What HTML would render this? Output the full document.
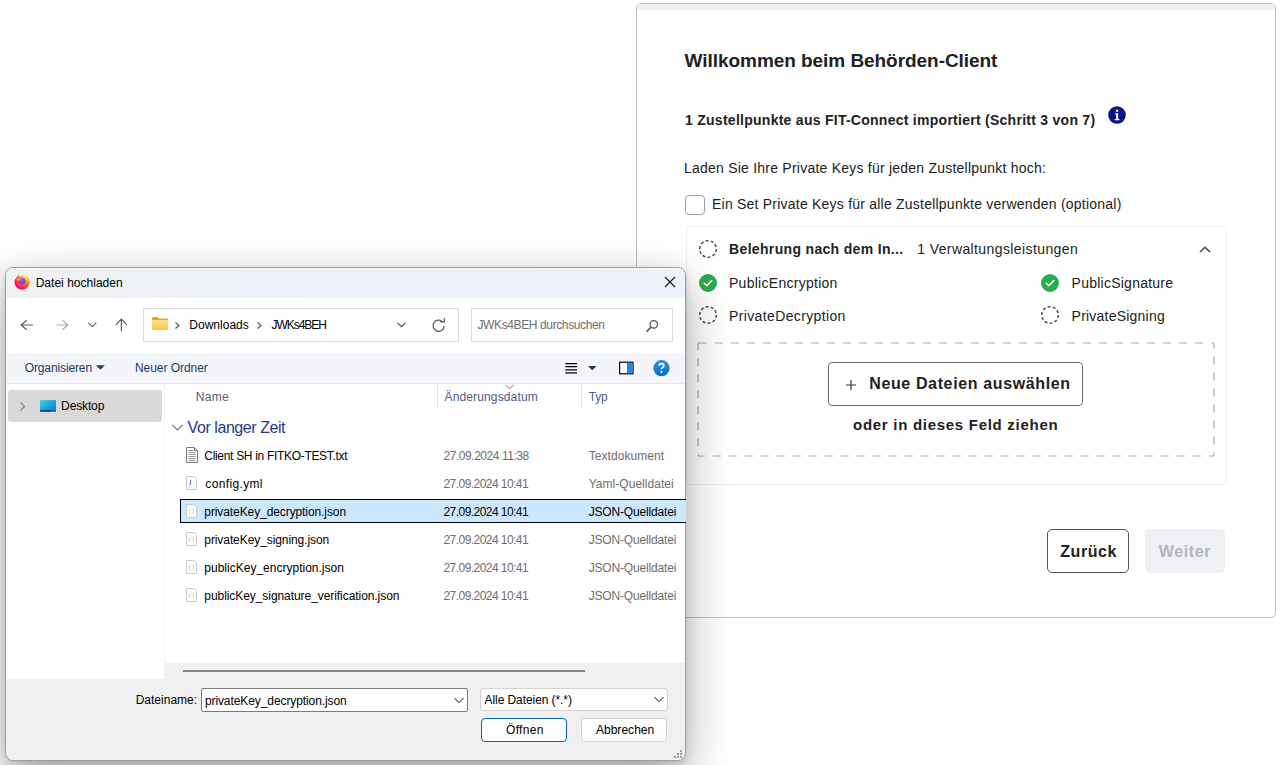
<!DOCTYPE html>
<html><head><meta charset="utf-8">
<style>
*{box-sizing:border-box;margin:0;padding:0}
html,body{width:1281px;height:765px;overflow:hidden;background:#fff;font-family:"Liberation Sans",sans-serif;position:relative}
.a{position:absolute}
.t{position:absolute;white-space:nowrap;line-height:1;font-family:"Liberation Sans",sans-serif}
</style></head><body>
<div class="a" style="left:636px;top:3px;width:640px;height:615px;border:1px solid #bdbec2;border-radius:5px;background:#fff;overflow:hidden">
  <div class="a" style="left:0;top:0;width:100%;height:6px;background:#eef0f3"></div>
</div>
<svg class="a" style="left:1107px;top:105px" width="20" height="20" viewBox="0 0 20 20"><circle cx="10" cy="10" r="8.8" fill="#07138a"/><rect x="9" y="4.6" width="2.2" height="2.2" fill="#fff"/><path d="M8.1 8.3h3.1v5.6h1.3v1.4H7.6v-1.4h1.4V9.6h-0.9z" fill="#fff"/></svg>
<div class="a" style="left:685px;top:195px;width:20px;height:20px;border:1px solid #9c9ea3;border-radius:4px;background:#fff"></div>
<div class="a" style="left:686px;top:226px;width:541px;height:259px;border:1px solid #eceef2;border-radius:4px"></div>
<svg class="a" style="left:698px;top:239px;" width="20" height="20" viewBox="0 0 20 20"><circle cx="10" cy="10" r="8.3" fill="none" stroke="#4a4a4a" stroke-width="1.45" stroke-dasharray="3 2.2"/></svg>
<svg class="a" style="left:698px;top:273px;" width="20" height="20" viewBox="0 0 20 20"><circle cx="10" cy="10" r="9" fill="#2aac4c"/><path d="M6.3 10.3L8.8 12.7L13.7 7.6" fill="none" stroke="#fff" stroke-width="1.6" stroke-linecap="round" stroke-linejoin="round"/></svg>
<svg class="a" style="left:698px;top:305px;" width="20" height="20" viewBox="0 0 20 20"><circle cx="10" cy="10" r="8.3" fill="none" stroke="#4a4a4a" stroke-width="1.45" stroke-dasharray="3 2.2"/></svg>
<svg class="a" style="left:1040px;top:273px;" width="20" height="20" viewBox="0 0 20 20"><circle cx="10" cy="10" r="9" fill="#2aac4c"/><path d="M6.3 10.3L8.8 12.7L13.7 7.6" fill="none" stroke="#fff" stroke-width="1.6" stroke-linecap="round" stroke-linejoin="round"/></svg>
<svg class="a" style="left:1040px;top:305px;" width="20" height="20" viewBox="0 0 20 20"><circle cx="10" cy="10" r="8.3" fill="none" stroke="#4a4a4a" stroke-width="1.45" stroke-dasharray="3 2.2"/></svg>
<svg class="a" style="left:1198px;top:244px" width="14" height="10" viewBox="0 0 14 10"><path d="M2 8L7 3.2L12 8" fill="none" stroke="#444" stroke-width="1.5"/></svg>
<svg class="a" style="left:697px;top:342px" width="518" height="115" viewBox="0 0 518 115"><rect x="1" y="1" width="516" height="113" rx="1" fill="none" stroke="#a9abb0" stroke-width="1.2" stroke-dasharray="8 8"/></svg>
<div class="a" style="left:828px;top:362px;width:255px;height:44px;border:1px solid #6c6c6c;border-radius:4px;background:#fff"></div>
<svg class="a" style="left:845px;top:379px" width="12" height="12" viewBox="0 0 12 12"><path d="M6 1v10M1 6h10" stroke="#333" stroke-width="1.2"/></svg>
<div class="a" style="left:1047px;top:529px;width:82px;height:44px;border:1px solid #555;border-radius:5px;background:#fff"></div>
<div class="a" style="left:1145px;top:529px;width:80px;height:44px;border-radius:5px;background:#eef0f3"></div>

<div class="a" style="left:5px;top:267px;width:681px;height:494px;border:1px solid #9c9c9c;border-radius:8px;background:#f0f0f0;overflow:hidden;box-shadow:0 16px 48px rgba(0,0,0,0.33), 0 4px 8px rgba(0,0,0,0.12)">
  <div class="a" style="left:0;top:0;width:100%;height:30px;background:linear-gradient(90deg,#f0f1f2,#edf2f8 35%,#eef3f9);border-top:1px solid #f3f7fc"></div>
  <div class="a" style="left:0;top:30px;width:100%;height:55px;background:#fff"></div>
  <div class="a" style="left:0;top:85px;width:100%;height:31px;background:#f3f5f8;border-bottom:1px solid #e6e8eb"></div>
  <div class="a" style="left:0;top:116px;width:159px;height:295px;background:#fff;border-right:1px solid #f4f4f4"></div>
  <div class="a" style="left:159px;top:116px;width:520px;height:279px;background:#fff"></div>
  <div class="a" style="left:177px;top:402px;width:402px;height:2px;background:#858585"></div>
  <div class="a" style="left:0;bottom:0;width:100%;height:1px;background:#f5f5f5"></div>
</div>
<svg class="a" style="left:13px;top:272px;" width="18" height="18" viewBox="0 0 18 18"><defs><radialGradient id="ff" cx="0.78" cy="0.12" r="1.0"><stop offset="0" stop-color="#fff44f"/><stop offset="0.3" stop-color="#ffb22a"/><stop offset="0.55" stop-color="#ff5f2e"/><stop offset="0.85" stop-color="#f5156c"/><stop offset="1" stop-color="#e0187e"/></radialGradient><radialGradient id="fp" cx="0.35" cy="0.25" r="0.85"><stop offset="0" stop-color="#b55cff"/><stop offset="1" stop-color="#4a3bd8"/></radialGradient></defs><path d="M3.6 5.2Q1.4 7.6 1.4 10.2A7.6 7.6 0 0 0 16.6 10.2Q16.6 5.4 12.2 2.2Q13 4.4 12.4 5.6Q10.8 3.6 8 3.9Q6.8 4 5.6 4.6Q5.6 3.6 6.2 2.4Q4.4 3.4 3.6 5.2z" fill="url(#ff)"/><circle cx="9.2" cy="9.3" r="3.3" fill="url(#fp)"/><path d="M3.6 6.4Q5.6 6 7.2 7.2Q8.4 8.2 6.4 8.6Q4.6 8.8 3.4 8z" fill="#ff9a24"/></svg>
<svg class="a" style="left:664px;top:276px;" width="12" height="12" viewBox="0 0 12 12"><path d="M1 1L11 11M11 1L1 11" stroke="#111" stroke-width="1.1"/></svg>
<svg class="a" style="left:19px;top:318px;" width="16" height="14" viewBox="0 0 16 14"><path d="M2.2 7H14M7.7 2.2L2.2 7L7.7 11.8" fill="none" stroke="#5f5f5f" stroke-width="1.2"/></svg>
<svg class="a" style="left:55px;top:318px;" width="16" height="14" viewBox="0 0 16 14"><path d="M1.2 7H13M7.3 2.2L12.8 7L7.3 11.8" fill="none" stroke="#ababab" stroke-width="1.2"/></svg>
<svg class="a" style="left:87px;top:320px;" width="11" height="9" viewBox="0 0 11 9"><path d="M1.3 2.8L5.4 6.6L9.3 2.8" fill="none" stroke="#555" stroke-width="1.1"/></svg>
<svg class="a" style="left:114px;top:317px;" width="15" height="16" viewBox="0 0 15 16"><path d="M7.4 2.2V14M2 7.8L7.4 2.2L12.9 7.8" fill="none" stroke="#5a5a5a" stroke-width="1.2"/></svg>
<div class="a" style="left:143px;top:308px;width:316px;height:34px;border:1px solid #dcdcdc;background:#fff"></div>
<svg class="a" style="left:151px;top:316px;" width="18" height="15" viewBox="0 0 18 15"><defs><linearGradient id="fg" x1="0" y1="0" x2="0" y2="1"><stop offset="0" stop-color="#ffe38a"/><stop offset="1" stop-color="#f7c744"/></linearGradient></defs><path d="M1 2.2Q1 1 2.2 1H6.5L8 2.6H15.8Q17 2.6 17 3.8V4.5H1z" fill="#eaa315"/><rect x="1" y="4" width="16" height="10" rx="1.2" fill="url(#fg)"/></svg>
<svg class="a" style="left:174px;top:321px;" width="7" height="9" viewBox="0 0 7 9"><path d="M1.5 1.5L5 4.5L1.5 7.5" fill="none" stroke="#555" stroke-width="1.1"/></svg>
<svg class="a" style="left:256px;top:321px;" width="7" height="9" viewBox="0 0 7 9"><path d="M1.5 1.5L5 4.5L1.5 7.5" fill="none" stroke="#555" stroke-width="1.1"/></svg>
<svg class="a" style="left:396px;top:321px;" width="11" height="8" viewBox="0 0 11 8"><path d="M1.5 1.8L5.5 5.7L9.5 1.8" fill="none" stroke="#555" stroke-width="1.1"/></svg>
<svg class="a" style="left:431px;top:318px;" width="16" height="16" viewBox="0 0 16 16"><path d="M13.2 8A5.6 5.6 0 1 1 11.4 3.6" fill="none" stroke="#555" stroke-width="1.2"/><path d="M9.2 3.9H13.3V0.3" fill="none" stroke="#555" stroke-width="1.2"/></svg>
<div class="a" style="left:471px;top:308px;width:202px;height:34px;border:1px solid #dcdcdc;background:#fff"></div>
<svg class="a" style="left:644px;top:318px;" width="16" height="16" viewBox="0 0 16 16"><circle cx="9.8" cy="6.4" r="3.7" fill="none" stroke="#555" stroke-width="1.3"/><path d="M7.2 9L2.6 13.6" stroke="#555" stroke-width="1.6"/></svg>
<svg class="a" style="left:95px;top:364px;" width="11" height="7" viewBox="0 0 11 7"><path d="M1 1.2H9.8L5.4 5.8z" fill="#1c3a63"/></svg>
<svg class="a" style="left:563px;top:361px;" width="16" height="15" viewBox="0 0 16 15"><path d="M2.3 2.6H14M2.3 5.7H14M2.3 8.8H14M2.3 11.9H14" stroke="#000" stroke-width="1.3"/></svg>
<svg class="a" style="left:587px;top:365px;" width="11" height="7" viewBox="0 0 11 7"><path d="M1 1H9.5L5.2 5.3z" fill="#1a3357"/></svg>
<svg class="a" style="left:618px;top:361px;" width="17" height="14" viewBox="0 0 17 14"><rect x="1.6" y="1.2" width="13.4" height="11.6" fill="#fff" stroke="#000" stroke-width="1.2"/><rect x="8.9" y="1.8" width="5.6" height="10.4" fill="#1b8ce3"/></svg>
<svg class="a" style="left:652px;top:359px;" width="19" height="19" viewBox="0 0 19 19"><defs><linearGradient id="hg" x1="0" y1="0" x2="0" y2="1"><stop offset="0" stop-color="#2a8fe0"/><stop offset="1" stop-color="#0a6cc6"/></linearGradient></defs><circle cx="9.5" cy="9.2" r="8.1" fill="url(#hg)"/><path d="M7.2 6.8Q7.2 4.6 9.5 4.6Q11.8 4.6 11.8 6.6Q11.8 8 10.3 8.7Q9.5 9.1 9.5 10.6" fill="none" stroke="#fff" stroke-width="1.7"/><rect x="8.6" y="12" width="1.8" height="1.8" fill="#fff"/></svg>
<div class="a" style="left:8px;top:390px;width:154px;height:32px;border-radius:3px;background:#d9d9d9"></div>
<svg class="a" style="left:18px;top:401px;" width="9" height="11" viewBox="0 0 9 11"><path d="M2.5 1.5L6.5 5.5L2.5 9.5" fill="none" stroke="#858585" stroke-width="1.3"/></svg>
<svg class="a" style="left:39px;top:399px;" width="18" height="14" viewBox="0 0 18 14"><defs><linearGradient id="dg" x1="0" y1="0" x2="1" y2="1"><stop offset="0" stop-color="#3ad3e0"/><stop offset="1" stop-color="#0f74cf"/></linearGradient></defs><rect x="1" y="1" width="16" height="11.5" rx="1.3" fill="url(#dg)"/><rect x="1" y="11.2" width="11.5" height="1.6" fill="#0a3e78"/><rect x="13.2" y="11.4" width="1.2" height="1.4" fill="#0a3e78"/><rect x="15.2" y="11.4" width="1.6" height="1.4" fill="#0a3e78"/></svg>
<div class="a" style="left:437px;top:384px;width:1px;height:25px;background:#e5e5e5"></div>
<div class="a" style="left:581px;top:384px;width:1px;height:25px;background:#e5e5e5"></div>
<svg class="a" style="left:504px;top:384px;" width="11" height="6" viewBox="0 0 11 6"><path d="M1.5 1L5.5 4.6L9.5 1" fill="none" stroke="#777" stroke-width="1"/></svg>
<svg class="a" style="left:171px;top:423px;" width="13" height="9" viewBox="0 0 13 9"><path d="M1.2 1.8L6.4 7L11.6 1.8" fill="none" stroke="#6f6f6f" stroke-width="1.1"/></svg>
<div class="a" style="left:180px;top:499px;width:506px;height:24px;background:#cce8ff;border:1px solid #000;border-right:none"></div>
<svg class="a" style="left:185px;top:446px;" width="14" height="18" viewBox="0 0 14 18"><path d="M1.5 1.5H9.5L12.5 4.5V16.5H1.5z" fill="#fff" stroke="#7b7b7b" stroke-width="1"/><path d="M9.5 1.5V4.5H12.5" fill="none" stroke="#7b7b7b" stroke-width="1"/><path d="M3.5 4.5H8M3.5 6.5H10.5M3.5 8.5H10.5M3.5 10.5H10.5M3.5 12.5H10.5M3.5 14.5H10.5" stroke="#8a8a8a" stroke-width="0.9"/></svg>
<svg class="a" style="left:185px;top:475px;" width="13" height="16" viewBox="0 0 13 16"><path d="M1.5 1.5H9L11.5 4V14.5H1.5z" fill="#fff" stroke="#c9c9c9" stroke-width="1"/><path d="M5.8 5L5.2 10M4.9 11.8V12.6" stroke="#9a6fc9" stroke-width="1.2"/></svg>
<svg class="a" style="left:185px;top:503px;" width="13" height="16" viewBox="0 0 13 16"><path d="M1.5 1.5H9L11.5 4V14.5H1.5z" fill="#fff" stroke="#c9c9c9" stroke-width="1"/><path d="M5.4 5.6Q4.6 5.8 4.7 7.2Q4.8 8.1 4.2 8.4Q4.8 8.7 4.7 9.6Q4.6 11 5.4 11.2M7.6 5.6Q8.4 5.8 8.3 7.2Q8.2 8.1 8.8 8.4Q8.2 8.7 8.3 9.6Q8.4 11 7.6 11.2" fill="none" stroke="#c2c25e" stroke-width="0.8"/></svg>
<svg class="a" style="left:185px;top:531px;" width="13" height="16" viewBox="0 0 13 16"><path d="M1.5 1.5H9L11.5 4V14.5H1.5z" fill="#fff" stroke="#c9c9c9" stroke-width="1"/><path d="M5.4 5.6Q4.6 5.8 4.7 7.2Q4.8 8.1 4.2 8.4Q4.8 8.7 4.7 9.6Q4.6 11 5.4 11.2M7.6 5.6Q8.4 5.8 8.3 7.2Q8.2 8.1 8.8 8.4Q8.2 8.7 8.3 9.6Q8.4 11 7.6 11.2" fill="none" stroke="#c2c25e" stroke-width="0.8"/></svg>
<svg class="a" style="left:185px;top:559px;" width="13" height="16" viewBox="0 0 13 16"><path d="M1.5 1.5H9L11.5 4V14.5H1.5z" fill="#fff" stroke="#c9c9c9" stroke-width="1"/><path d="M5.4 5.6Q4.6 5.8 4.7 7.2Q4.8 8.1 4.2 8.4Q4.8 8.7 4.7 9.6Q4.6 11 5.4 11.2M7.6 5.6Q8.4 5.8 8.3 7.2Q8.2 8.1 8.8 8.4Q8.2 8.7 8.3 9.6Q8.4 11 7.6 11.2" fill="none" stroke="#c2c25e" stroke-width="0.8"/></svg>
<svg class="a" style="left:185px;top:587px;" width="13" height="16" viewBox="0 0 13 16"><path d="M1.5 1.5H9L11.5 4V14.5H1.5z" fill="#fff" stroke="#c9c9c9" stroke-width="1"/><path d="M5.4 5.6Q4.6 5.8 4.7 7.2Q4.8 8.1 4.2 8.4Q4.8 8.7 4.7 9.6Q4.6 11 5.4 11.2M7.6 5.6Q8.4 5.8 8.3 7.2Q8.2 8.1 8.8 8.4Q8.2 8.7 8.3 9.6Q8.4 11 7.6 11.2" fill="none" stroke="#c2c25e" stroke-width="0.8"/></svg>

<div class="a" style="left:201px;top:688px;width:267px;height:24px;border:1px solid #7a7a7a;border-radius:2px;background:#fff"></div>
<svg class="a" style="left:453px;top:696px" width="12" height="9" viewBox="0 0 12 9"><path d="M1.5 2.2L6 6.6L10.5 2.2" fill="none" stroke="#555" stroke-width="1.1"/></svg>
<div class="a" style="left:480px;top:688px;width:188px;height:23px;border:1px solid #d2d2d2;border-radius:3px;background:#fdfdfd"></div>
<svg class="a" style="left:653px;top:695px" width="12" height="9" viewBox="0 0 12 9"><path d="M1.5 2.2L6 6.6L10.5 2.2" fill="none" stroke="#555" stroke-width="1.1"/></svg>
<div class="a" style="left:481px;top:718px;width:86px;height:24px;border:1.5px solid #0a67c2;border-radius:4px;background:#fdfdfd"></div>
<div class="a" style="left:581px;top:718px;width:86px;height:24px;border:1px solid #d3d3d3;border-radius:4px;background:#fdfdfd"></div>
<svg class="a" style="left:673px;top:749px" width="10" height="10" viewBox="0 0 10 10"><path d="M7 1h2v2H7zM4 4h2v2H4zM7 4h2v2H7zM1 7h2v2H1zM4 7h2v2H4zM7 7h2v2H7z" fill="#a0a0a0"/></svg>
<span class="t" style="left:684.60px;top:51.00px;font-size:19px;font-weight:700;letter-spacing:-0.053px;color:#212121">Willkommen beim Behörden-Client</span>
<span class="t" style="left:685.00px;top:112.90px;font-size:14px;font-weight:700;letter-spacing:0.266px;color:#212121">1 Zustellpunkte aus FIT-Connect importiert (Schritt 3 von 7)</span>
<span class="t" style="left:684.00px;top:160.90px;font-size:14px;font-weight:400;letter-spacing:0.227px;color:#212121">Laden Sie Ihre Private Keys für jeden Zustellpunkt hoch:</span>
<span class="t" style="left:712.00px;top:196.60px;font-size:14px;font-weight:400;letter-spacing:0.222px;color:#212121">Ein Set Private Keys für alle Zustellpunkte verwenden (optional)</span>
<span class="t" style="left:729.10px;top:241.70px;font-size:14px;font-weight:700;letter-spacing:0.330px;color:#212121">Belehrung nach dem In...</span>
<span class="t" style="left:917.20px;top:241.70px;font-size:14px;font-weight:400;letter-spacing:0.400px;color:#212121">1 Verwaltungsleistungen</span>
<span class="t" style="left:729.00px;top:276.10px;font-size:14px;font-weight:400;letter-spacing:0.273px;color:#212121">PublicEncryption</span>
<span class="t" style="left:1071.60px;top:276.10px;font-size:14px;font-weight:400;letter-spacing:0.243px;color:#212121">PublicSignature</span>
<span class="t" style="left:729.00px;top:308.90px;font-size:14px;font-weight:400;letter-spacing:0.369px;color:#212121">PrivateDecryption</span>
<span class="t" style="left:1071.60px;top:308.90px;font-size:14px;font-weight:400;letter-spacing:0.215px;color:#212121">PrivateSigning</span>
<span class="t" style="left:869.20px;top:376.00px;font-size:16px;font-weight:700;letter-spacing:0.633px;color:#212121">Neue Dateien auswählen</span>
<span class="t" style="left:853.00px;top:417.40px;font-size:15px;font-weight:700;letter-spacing:0.716px;color:#212121">oder in dieses Feld ziehen</span>
<span class="t" style="left:1060.30px;top:543.70px;font-size:16px;font-weight:700;letter-spacing:0.540px;color:#212121">Zurück</span>
<span class="t" style="left:1158.70px;top:543.70px;font-size:16px;font-weight:700;letter-spacing:0.660px;color:#b4b6bb">Weiter</span>
<span class="t" style="left:35.70px;top:276.90px;font-size:12px;font-weight:400;letter-spacing:0.018px;color:#000">Datei hochladen</span>
<span class="t" style="left:189.30px;top:318.70px;font-size:12px;font-weight:400;letter-spacing:0.012px;color:#000">Downloads</span>
<span class="t" style="left:271.50px;top:318.70px;font-size:12px;font-weight:400;letter-spacing:-1.043px;color:#000">JWKs4BEH</span>
<span class="t" style="left:477.50px;top:318.70px;font-size:12px;font-weight:400;letter-spacing:-0.384px;color:#6e6e6e">JWKs4BEH durchsuchen</span>
<span class="t" style="left:24.70px;top:361.80px;font-size:12px;font-weight:400;letter-spacing:-0.118px;color:#1c3a63">Organisieren</span>
<span class="t" style="left:134.90px;top:361.80px;font-size:12px;font-weight:400;letter-spacing:-0.036px;color:#1c3a63">Neuer Ordner</span>
<span class="t" style="left:61.10px;top:400.00px;font-size:12px;font-weight:400;letter-spacing:-0.133px;color:#000">Desktop</span>
<span class="t" style="left:195.70px;top:390.80px;font-size:12px;font-weight:400;letter-spacing:0.333px;color:#4f5b84">Name</span>
<span class="t" style="left:444.50px;top:390.80px;font-size:12px;font-weight:400;letter-spacing:0.138px;color:#4f5b84">Änderungsdatum</span>
<span class="t" style="left:588.70px;top:390.80px;font-size:12px;font-weight:400;letter-spacing:-0.200px;color:#4f5b84">Typ</span>
<span class="t" style="left:187.60px;top:420.00px;font-size:16px;font-weight:400;letter-spacing:-0.436px;color:#1e3a8c">Vor langer Zeit</span>
<span class="t" style="left:204.30px;top:450.00px;font-size:12px;font-weight:400;letter-spacing:-0.312px;color:#000">Client SH in FITKO-TEST.txt</span>
<span class="t" style="left:443.50px;top:450.00px;font-size:12px;font-weight:400;letter-spacing:-0.453px;color:#6d6d6d">27.09.2024 11:38</span>
<span class="t" style="left:588.70px;top:450.00px;font-size:12px;font-weight:400;letter-spacing:0.073px;color:#6d6d6d">Textdokument</span>
<span class="t" style="left:205.30px;top:478.00px;font-size:12px;font-weight:400;letter-spacing:0.356px;color:#000">config.yml</span>
<span class="t" style="left:443.50px;top:478.00px;font-size:12px;font-weight:400;letter-spacing:-0.553px;color:#6d6d6d">27.09.2024 10:41</span>
<span class="t" style="left:588.70px;top:478.00px;font-size:12px;font-weight:400;letter-spacing:0.036px;color:#6d6d6d">Yaml-Quelldatei</span>
<span class="t" style="left:204.30px;top:506.00px;font-size:12px;font-weight:400;letter-spacing:-0.092px;color:#000">privateKey_decryption.json</span>
<span class="t" style="left:443.50px;top:506.00px;font-size:12px;font-weight:400;letter-spacing:-0.553px;color:#000">27.09.2024 10:41</span>
<span class="t" style="left:588.70px;top:506.00px;font-size:12px;font-weight:400;letter-spacing:-0.171px;color:#000">JSON-Quelldatei</span>
<span class="t" style="left:204.30px;top:534.00px;font-size:12px;font-weight:400;letter-spacing:-0.086px;color:#000">privateKey_signing.json</span>
<span class="t" style="left:443.50px;top:534.00px;font-size:12px;font-weight:400;letter-spacing:-0.553px;color:#6d6d6d">27.09.2024 10:41</span>
<span class="t" style="left:588.70px;top:534.00px;font-size:12px;font-weight:400;letter-spacing:-0.171px;color:#6d6d6d">JSON-Quelldatei</span>
<span class="t" style="left:204.30px;top:562.00px;font-size:12px;font-weight:400;letter-spacing:0.008px;color:#000">publicKey_encryption.json</span>
<span class="t" style="left:443.50px;top:562.00px;font-size:12px;font-weight:400;letter-spacing:-0.553px;color:#6d6d6d">27.09.2024 10:41</span>
<span class="t" style="left:588.70px;top:562.00px;font-size:12px;font-weight:400;letter-spacing:-0.171px;color:#6d6d6d">JSON-Quelldatei</span>
<span class="t" style="left:204.30px;top:590.00px;font-size:12px;font-weight:400;letter-spacing:-0.064px;color:#000">publicKey_signature_verification.json</span>
<span class="t" style="left:443.50px;top:590.00px;font-size:12px;font-weight:400;letter-spacing:-0.553px;color:#6d6d6d">27.09.2024 10:41</span>
<span class="t" style="left:588.70px;top:590.00px;font-size:12px;font-weight:400;letter-spacing:-0.171px;color:#6d6d6d">JSON-Quelldatei</span>
<span class="t" style="left:135.70px;top:693.80px;font-size:12px;font-weight:400;letter-spacing:0.000px;color:#000">Dateiname:</span>
<span class="t" style="left:204.90px;top:694.80px;font-size:12px;font-weight:400;letter-spacing:-0.088px;color:#000">privateKey_decryption.json</span>
<span class="t" style="left:484.60px;top:693.80px;font-size:12px;font-weight:400;letter-spacing:-0.082px;color:#000">Alle Dateien (*.*)</span>
<span class="t" style="left:506.00px;top:724.00px;font-size:12px;font-weight:400;letter-spacing:0.300px;color:#000">Öffnen</span>
<span class="t" style="left:595.90px;top:724.00px;font-size:12px;font-weight:400;letter-spacing:0.037px;color:#000">Abbrechen</span>
</body></html>
